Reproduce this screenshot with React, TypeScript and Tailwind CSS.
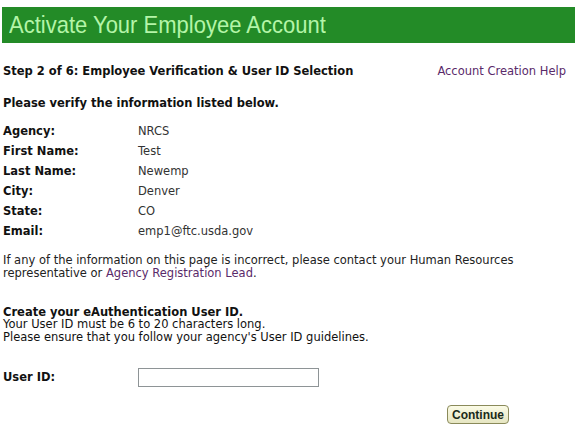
import React from 'react';

const rows: [string, string][] = [
  ['Agency:', 'NRCS'],
  ['First Name:', 'Test'],
  ['Last Name:', 'Newemp'],
  ['City:', 'Denver'],
  ['State:', 'CO'],
  ['Email:', 'emp1@ftc.usda.gov'],
];

export default function App() {
  return (
    <div
      className="w-[577px] h-[440px] bg-white text-[11.5px] text-[#111] overflow-hidden"
      style={{ fontFamily: '"DejaVu Sans", Verdana, sans-serif' }}
    >
      <div className="pt-[7px] px-[2px]">
        <div className="h-[36px] bg-[#238b27] flex items-center pl-[7px]">
          <h1
            className="text-[22px] leading-none text-[#b4f5a8] scale-y-110 origin-left"
            style={{ fontFamily: '"Liberation Sans", Arial, sans-serif' }}
          >
            Activate Your Employee Account
          </h1>
        </div>
      </div>

      <div className="px-[3px]">
        <div className="flex justify-between items-baseline mt-[20px] pr-[8px]">
          <span className="font-bold">Step 2 of 6: Employee Verification &amp; User ID Selection</span>
          <a className="text-[#5a2a6a]" href="#">Account Creation Help</a>
        </div>

        <p className="font-bold mt-[15px]">Please verify the information listed below.</p>

        <div className="mt-[9px]">
          {rows.map(([label, value]) => (
            <div key={label} className="flex h-[20px] items-center">
              <span className="font-bold w-[135px]">{label}</span>
              <span className="text-[#333]">{value}</span>
            </div>
          ))}
        </div>

        <p className="mt-[12px] leading-[13px] text-[#222]">
          If any of the information on this page is incorrect, please contact your Human Resources
          <br />
          representative or <a className="text-[#5a2a6a]" href="#">Agency Registration Lead</a>.
        </p>

        <div className="mt-[26px] leading-[12.5px]">
          <p className="font-bold">Create your eAuthentication User ID.</p>
          <p>Your User ID must be 6 to 20 characters long.</p>
          <p>Please ensure that you follow your agency's User ID guidelines.</p>
        </div>

        <div className="flex items-center mt-[25px]">
          <span className="font-bold w-[135px]">User ID:</span>
          <input
            type="text"
            className="w-[181px] h-[19px] border border-[#8e9496] bg-white outline-none"
          />
        </div>

        <div className="flex justify-end pr-[65px] mt-[18px]">
          <button
            className="h-[19px] px-[4px] rounded-[4px] border border-[#8a8a5a] bg-gradient-to-b from-[#fbfbe6] to-[#e6e6c2] font-bold text-[#1a2a1a] leading-none"
            style={{ fontFamily: '"Liberation Sans", Arial, sans-serif', fontSize: '12px' }}
          >
            Continue
          </button>
        </div>
      </div>
    </div>
  );
}
